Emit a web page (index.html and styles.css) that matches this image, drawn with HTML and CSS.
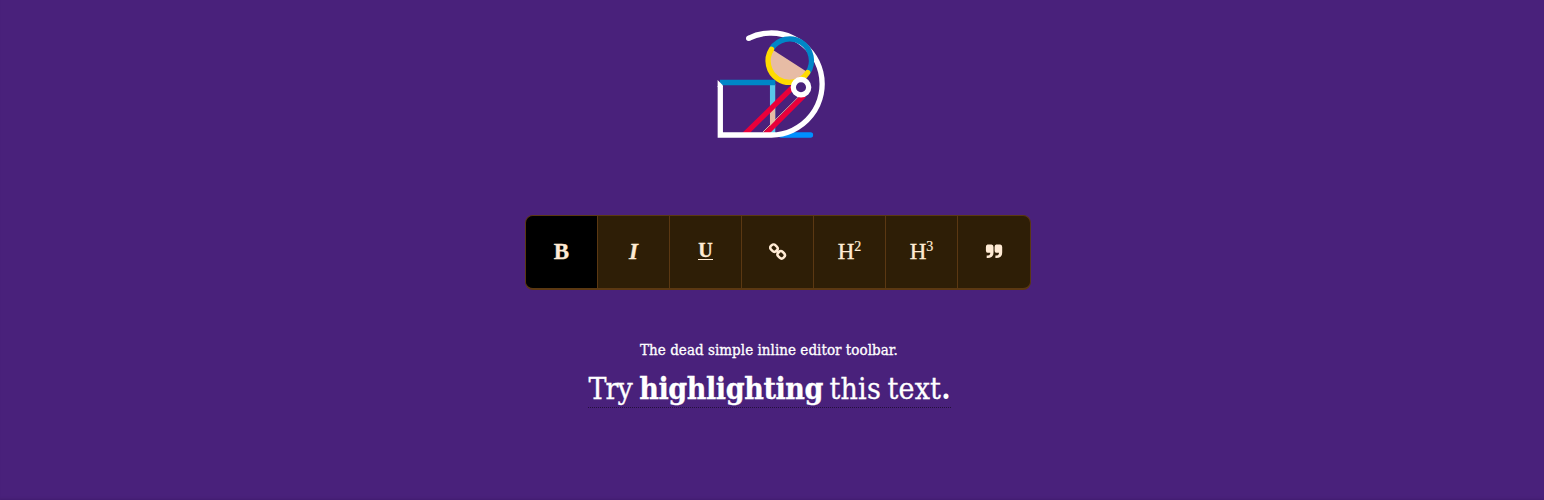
FILE: index.html
```html
<!DOCTYPE html>
<html lang="en">
<head>
<meta charset="utf-8">
<title>Inline editor toolbar</title>
<link rel="stylesheet" href="styles.css">
</head>
<body>
<main class="hero">
  <svg class="logo" viewBox="716 28 111 112" fill="none" stroke-width="5.3">
    <path d="M772.6 84V133" stroke="#58c7ea"/>
    <path d="M770 111l5.2-5.2V122l-5.2 5.2z" fill="#e7bca5"/>
    <path d="M720 82.5H775.3" stroke="#0086c7"/>
    <path d="M781 135H810.5" stroke="#0090ff" stroke-linecap="round"/>
    <path d="M763 132L800 95.5" stroke="#e7bca5" stroke-width="1"/>
    <path d="M744 135L794 86M765.5 134L804 95.5" stroke="#e9003a"/>
    <path d="M748.5 38.3A51 51 0 1 1 771.5 135H720.3V86" stroke="#fff"/>
    <circle cx="748.6" cy="38.3" r="2.6" fill="#fff"/>
    <path d="M717.6 80L723 85.4V87H717.6z" fill="#fff"/>
    <path d="M771.5 48.9A21.5 21.5 0 0 0 808 72.4z" fill="#e7bca5"/>
    <path d="M771.5 48.9A21.5 21.5 0 0 1 808 72.4" stroke="#0086c7"/>
    <path d="M771.5 49.2A21.5 21.5 0 0 0 807.7 72.5" stroke="#ffdb00" stroke-linecap="round"/>
    <circle cx="801" cy="87.2" r="7.7" fill="#49217b" stroke="#fff"/>
  </svg>
  <div class="toolbar">
    <button class="tool tool-active"><b>B</b></button>
    <button class="tool"><b class="italic">I</b></button>
    <button class="tool"><b class="underlined">U</b></button>
    <button class="tool" aria-label="Link">
      <svg class="icon" viewBox="0 0 18 18" fill="none" stroke="#ffebd4" stroke-width="2.5"><rect x="1.3" y="2" width="7.4" height="6.2" rx="2.8" transform="rotate(45 5 5.1)"/><rect x="8.5" y="8.7" width="7.4" height="6.2" rx="2.8" transform="rotate(45 12.2 11.8)"/><path d="M6.5 7L10.5 10.2"/></svg>
    </button>
    <button class="tool"><span class="heading">H<sup>2</sup></span></button>
    <button class="tool"><span class="heading">H<sup>3</sup></span></button>
    <button class="tool" aria-label="Quote">
      <svg class="icon" viewBox="0 0 18 18" fill="#ffebd4"><path id="q" d="M2.5 1.5H6.5Q8.5 1.5 8.5 4V9.5Q8.5 15 2.5 15H1.7V12.6H2.5Q5.3 12.6 5.3 9.8H2.5Q.9 9.8 .9 7.5V4Q.9 1.5 2.5 1.5Z"/><use href="#q" x="8.7"/></svg>
    </button>
  </div>
  <p class="tagline">The dead simple inline editor toolbar.</p>
  <p class="sample"><span class="try">Try </span><b class="strong">highlighting</b><span class="rest"> this text</span><b>.</b></p>
</main>
</body>
</html>
```
FILE: styles.css
```css
* { box-sizing: border-box; }
body { margin: 0; background: #49217b; color: #fff; }
.hero {
  height: 500px;
  padding-top: 28px;
  display: flex;
  flex-direction: column;
  align-items: center;
  font-family: "DejaVu Serif Condensed", "DejaVu Serif", serif;
  font-stretch: condensed;
  box-shadow: inset 0 -3px 3px -2px #421d70;
}
.logo { width: 111px; height: 112px; flex: none; margin-right: 1px; }
.toolbar {
  display: flex;
  width: 506px;
  height: 75px;
  margin: 75px 0 0 12px;
  border: 1px solid #5b3812;
  border-bottom-width: 2px;
  border-radius: 8px;
  overflow: hidden;
  background: #2e1e06;
}
.tool {
  width: 72px;
  padding: 0;
  border: 0;
  border-right: 1px solid #5b3812;
  background: none;
  color: #ffebd4;
  font: 23px/72px "Liberation Serif", serif;
}
.tool:last-child { border-right: 0; }
.tool b { -webkit-text-stroke: .3px #ffebd4; }
.tool-active { background: #000; }
.italic { font-style: italic; }
.underlined {
  display: inline-block;
  height: 16px;
  font-size: 20px;
  line-height: 12px;
  border-bottom: 1px solid #ffebd4;
  vertical-align: 2px;
}
.icon { display: block; width: 18px; height: 18px; margin: 0 auto; }
.heading { -webkit-text-stroke: .4px #ffebd4; }
.heading sup { font-size: 14px; line-height: 0; vertical-align: 8px; -webkit-text-stroke-width: .2px; }
.tagline {
  margin: 50px 0 0;
  padding-right: 6px;
  font-size: 15px;
  line-height: 20px;
  letter-spacing: .04px;
  white-space: nowrap;
  -webkit-text-stroke: .3px #fff;
}
.sample {
  margin: 11px 5px 0 0;
  height: 37px;
  font-size: 30px;
  line-height: 36px;
  white-space: pre;
  border-bottom: 1px dotted #24103c;
}
.try { letter-spacing: -1px; -webkit-text-stroke: .3px #fff; }
.strong { letter-spacing: -.4px; -webkit-text-stroke: .3px #fff; }
.rest { word-spacing: -2.3px; letter-spacing: .2px; -webkit-text-stroke: .3px #fff; }
```
